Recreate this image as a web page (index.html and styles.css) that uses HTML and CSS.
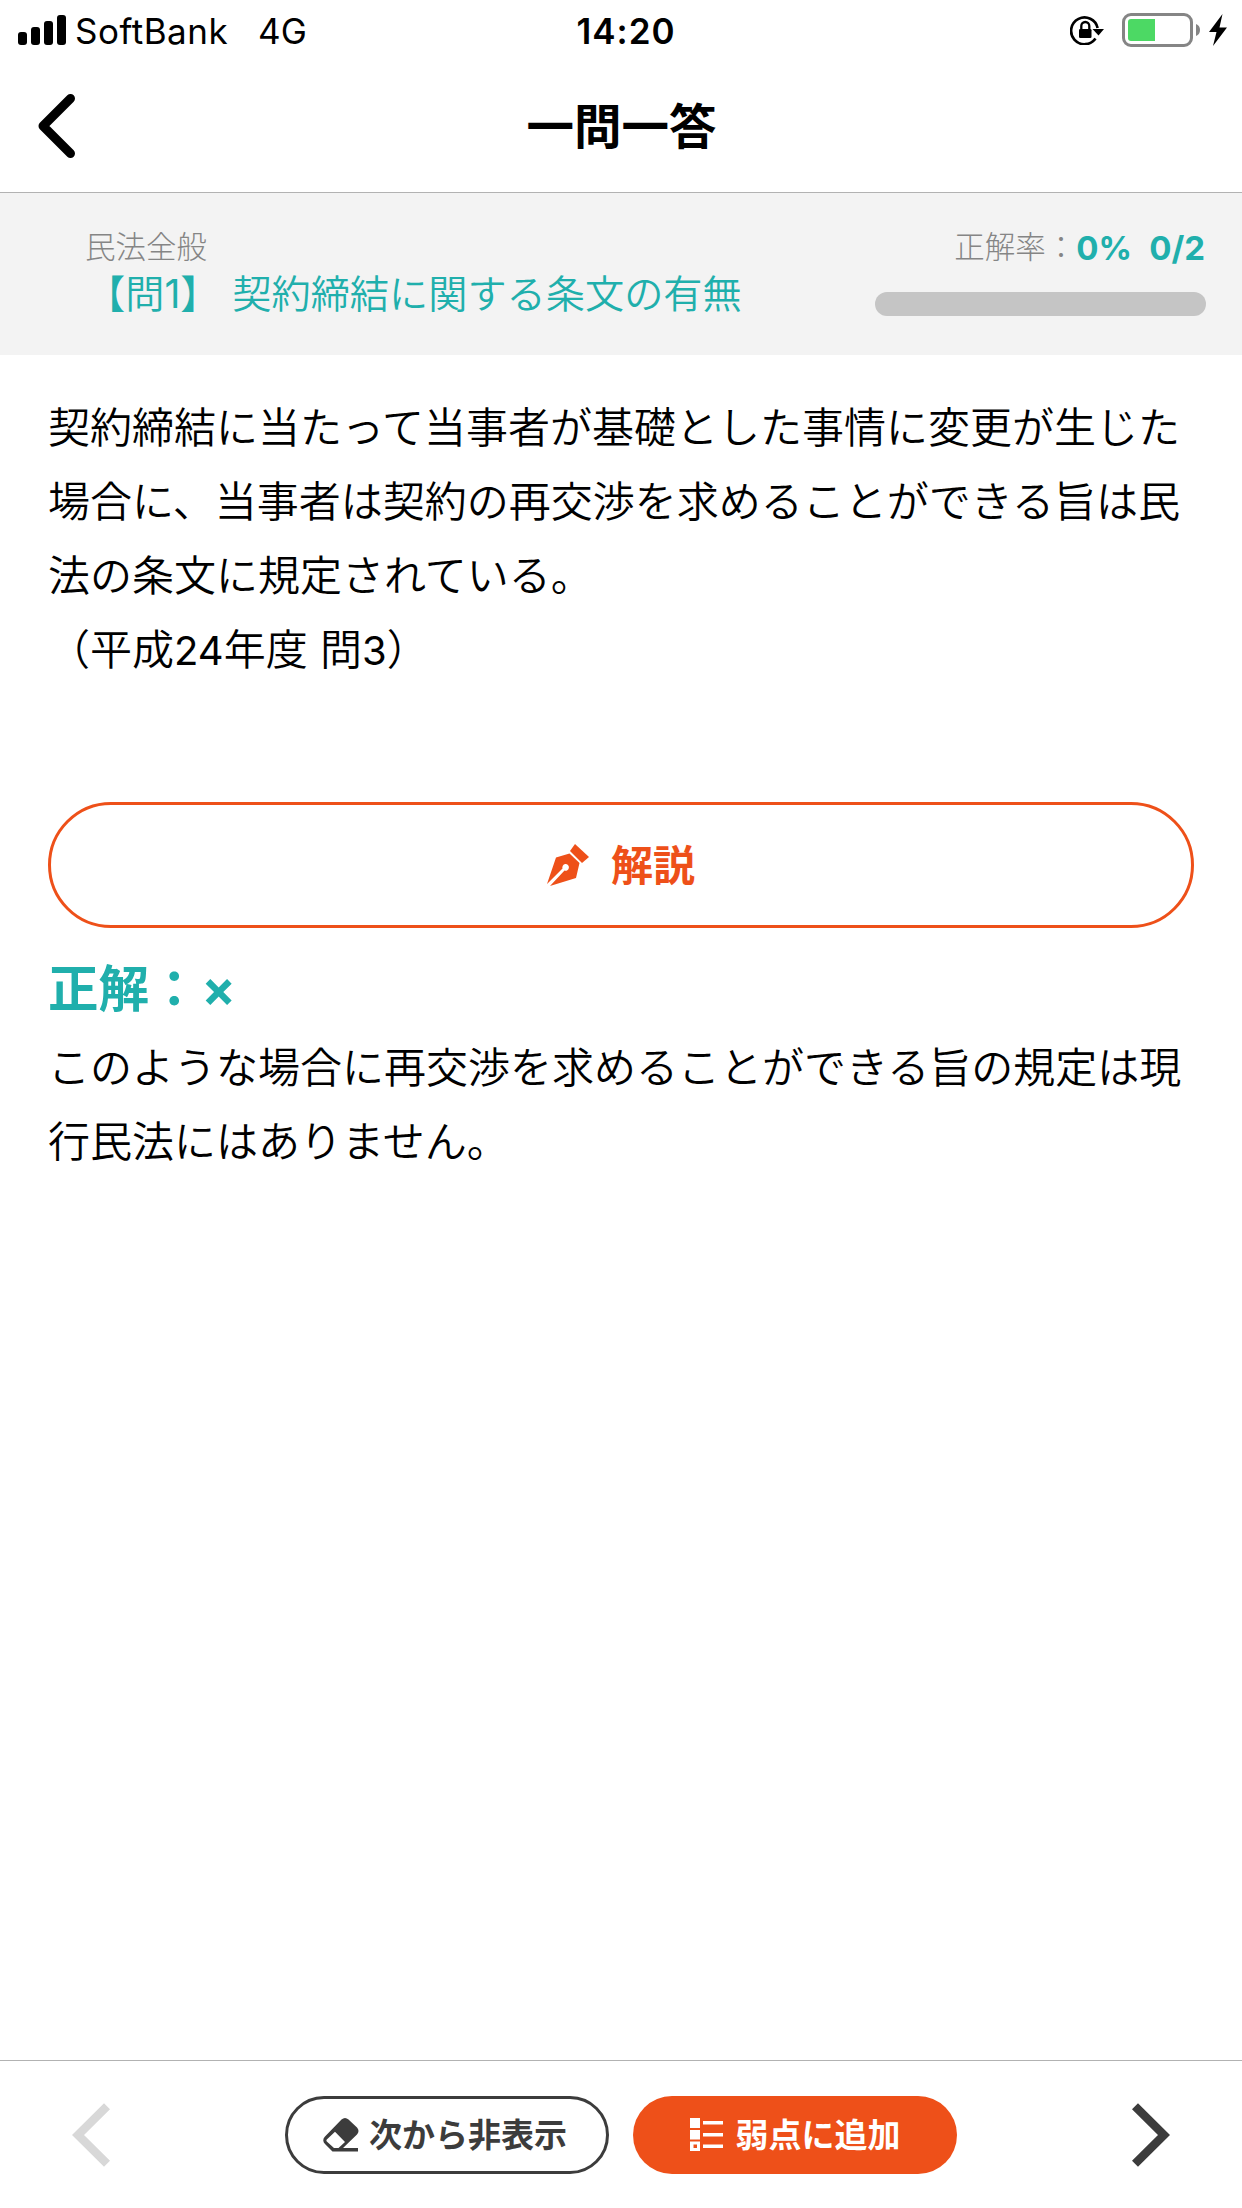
FILE: index.html
```html
<!DOCTYPE html>
<html lang="ja">
<head>
<meta charset="utf-8">
<title>一問一答</title>
<link rel="stylesheet" href="styles.css">
</head>
<body>
<div class="status">
  <div class="status-left">
    <svg class="signal" width="48" height="30" viewBox="0 0 48 30"><rect x="0" y="17" width="9" height="13" rx="3"/><rect x="13" y="12" width="9" height="18" rx="3"/><rect x="26" y="6" width="9" height="24" rx="3"/><rect x="39" y="0" width="9" height="30" rx="3"/></svg>
    <span class="carrier">SoftBank</span>
    <span class="network">4G</span>
  </div>
  <div class="clock">14:20</div>
  <div class="status-right">
    <svg class="lock" width="34" height="30" viewBox="0 0 34 30"><path d="M27.6 13A13.4 13.4 0 1 0 25.5 23.5" fill="none" stroke="#000" stroke-width="2.7"/><path d="M22.5 14H34L28.5 20.5Z"/><rect x="9" y="14" width="12.5" height="9" rx="1.3"/><path d="M11.3 14V11a4 4 0 0 1 8 0V14" fill="none" stroke="#000" stroke-width="2.3"/></svg>
    <svg class="battery" width="78" height="34" viewBox="0 0 78 34"><rect x="1.5" y="1.5" width="68" height="31" rx="7.5" fill="#fff" stroke="#858585" stroke-width="3"/><path d="M9 6H33V28H9Q6 28 6 25V9Q6 6 9 6Z" fill="#4cd964"/><path d="M74 11Q78 12.5 78 17T74 23Z" fill="#858585"/></svg>
    <svg class="bolt" width="18" height="32" viewBox="0 0 18 32"><path d="M13.5 0L0 18H7.5L4 32L18 13.5H10.5Z"/></svg>
  </div>
</div>
<header class="navbar">
  <svg class="back" width="38" height="64" viewBox="0 0 38 64"><path d="M32.5 4.5L5 32L32.5 59.5" fill="none" stroke="#000" stroke-width="9" stroke-linecap="round" stroke-linejoin="round"/></svg>
  <h1 class="title">一問一答</h1>
</header>
<section class="summary">
  <div class="topic">
    <div class="category">民法全般</div>
    <div class="question-name">【問<span class="latin">1</span>】 契約締結に関する条文の有無</div>
  </div>
  <div class="score">
    <div class="score-text"><span>正解率：</span><b>0%</b><b class="count">0/2</b></div>
    <div class="progress"></div>
  </div>
</section>
<main class="content">
  <p class="question">契約締結に当たって当事者が基礎とした事情に変更が生じた<br>場合に、当事者は契約の再交渉を求めることができる旨は民<br>法の条文に規定されている。<br>（平成<span class="latin">24</span>年度 問<span class="latin">3</span>）</p>
  <div class="explain-button">
    <svg width="42" height="42" viewBox="0 0 42 42"><path d="M28 0L42 13L35 19L23 7Z"/><path d="M22.5 9.5L32.5 19L29 34L3 42L17.5 26.5A3.3 3.3 0 1 0 15.5 24.5L0 40L9 13.5Z"/></svg>
    <span>解説</span>
  </div>
  <h2 class="answer">正解：<span class="cross">×</span></h2>
  <p class="explanation">このような場合に再交渉を求めることができる旨の規定は現<br>行民法にはありません。</p>
</main>
<footer class="toolbar">
  <svg class="arrow prev" width="38" height="64" viewBox="0 0 38 64"><path d="M35 3.2L6 32L35 60.8"/></svg>
  <div class="actions">
    <div class="pill hide"><svg width="36" height="34" viewBox="0 0 36 34"><path fill-rule="evenodd" d="M18.5 1.5Q22 -1.5 25.5 1.5L34 9.5Q37 13 34 16.5L20 30H35V33.5H9.5L2 26Q-1.5 22 2 18.5ZM12 13.8L3.8 21.5Q3 22.5 3.8 23.5L11 30H15.5L22 24Z"/></svg><span>次から非表示</span></div>
    <div class="pill add"><svg width="33" height="33" viewBox="0 0 33 33"><path fill-rule="evenodd" d="M0 0H10V10H0ZM0 12H10V21.5H0ZM0 23.5H10V33H0ZM3.5 26.5V30H7V26.5ZM13 3H33V6.5H13ZM13 15H33V18.5H13ZM13 26.5H33V30H13Z"/></svg><span>弱点に追加</span></div>
  </div>
  <svg class="arrow next" width="38" height="64" viewBox="0 0 38 64"><path d="M3 3.2L32 32L3 60.8"/></svg>
</footer>
</body>
</html>
```
FILE: styles.css
```css
* { box-sizing: border-box; }
body {
  margin: 0;
  width: 1242px;
  height: 2208px;
  display: flex;
  flex-direction: column;
  background: #fff;
  color: #000;
  font-family: "Noto Sans CJK JP", sans-serif;
  white-space: nowrap;
}
h1, h2, p { margin: 0; }
svg { display: block; flex: none; }
.latin, .status, .score b, .cross { font-family: Inter, "Noto Sans CJK JP", sans-serif; }

.status {
  height: 60px;
  display: grid;
  grid-template-columns: 1fr auto 1fr;
  align-items: center;
  padding: 0 15px 0 18px;
  font-size: 35px;
  line-height: 60px;
}
.status-left, .status-right { display: flex; align-items: center; margin-top: -1px; }
.carrier, .network { padding-top: 2px; }
.carrier { margin-left: 9px; letter-spacing: 0.5px; font-weight: 400; }
.network { margin-left: 30px; font-weight: 400; }
.clock { font-weight: 600; letter-spacing: 1px; padding: 1px 0 0 7px; }
.status-right { justify-content: flex-end; }
.battery { margin: 0 9px 0 18px; }

.navbar {
  height: 133px;
  display: grid;
  grid-template-columns: 1fr auto 1fr;
  align-items: center;
  padding: 0 38px;
  border-bottom: 1px solid #b2b2b2;
}
.title { font-size: 47.5px; line-height: 60px; font-weight: 700; padding: 0 0 4px 1px; }

.summary {
  height: 162px;
  display: flex;
  justify-content: space-between;
  background: #f3f3f3;
  padding: 29px 36px 0 85px;
}
.category { font-size: 30.5px; line-height: 46px; color: #858585; font-weight: 300; }
.question-name { margin-top: -1px; padding-left: 1px; font-size: 39.2px; line-height: 48px; color: #20afac; font-weight: 350; word-spacing: 4px; }
.question-name .latin { font-weight: 400; }
.score { width: 331px; }
.score-text {
  display: flex;
  justify-content: flex-end;
  font-size: 30.5px;
  line-height: 46px;
  color: #858585;
  font-weight: 300;
  padding-right: 1px;
}
.score b { color: #20afac; font-weight: 700; font-size: 33px; padding-top: 3px; }
.score .count { margin-left: 17px; }
.progress { height: 24px; margin-top: 21px; border-radius: 12px; background: #c5c5c5; }

.content { flex: 1; padding: 33px 48px 0; }
.question, .explanation { font-size: 42px; line-height: 74px; font-weight: 350; }
.question { word-spacing: 3px; }
.question .latin { font-size: 40px; font-weight: 400; }
.explain-button {
  height: 126px;
  margin-top: 114px;
  display: flex;
  align-items: center;
  justify-content: center;
  gap: 22px;
  border: 3px solid #ee5019;
  border-radius: 63px;
  color: #ee5019;
  font-size: 42px;
  font-weight: 700;
}
.explain-button svg { fill: #ee5019; }
.explain-button span { padding-bottom: 6px; }
.answer { margin-top: 20px; font-size: 50.5px; line-height: 74px; color: #20afac; font-weight: 700; }
.cross { margin-left: 2px; }
.explanation { margin-top: 2px; }

.toolbar {
  height: 148px;
  display: flex;
  align-items: center;
  justify-content: space-between;
  padding: 0 72px;
  border-top: 1px solid #b2b2b2;
}
.arrow path { fill: none; stroke: #3c3c3c; stroke-width: 8.5; }
.prev path { stroke: #d8d8d8; }
.actions { display: flex; gap: 24px; }
.pill {
  width: 324px;
  height: 78px;
  border-radius: 39px;
  display: flex;
  align-items: center;
  justify-content: center;
  font-size: 33px;
  font-weight: 700;
}
.pill span { padding-bottom: 4px; }
.hide { border: 3px solid #3c3c3c; color: #3c3c3c; gap: 10px; padding-right: 4px; }
.hide svg { fill: #3c3c3c; }
.add { background: #ee5019; color: #fff; gap: 13px; }
.add svg { fill: #fff; }
```
